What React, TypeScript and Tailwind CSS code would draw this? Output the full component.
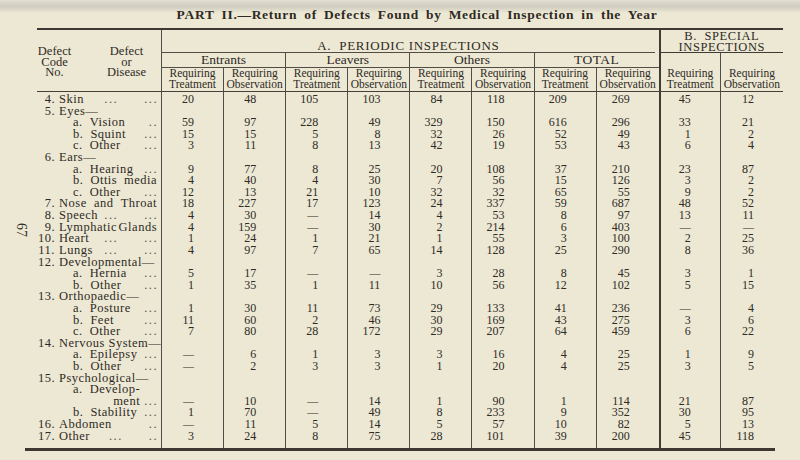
import React from "react";

type L = { n?: string; s?: string; t: string; d?: string[]; j?: boolean; right?: boolean };
type R = { l: L; v?: string };

const rows: R[] = [
  { l: { n: "4.", t: "Skin", d: ["...", "..."] }, v: "20 48 105 103 84 118 209 269 45 12" },
  { l: { n: "5.", t: "Eyes—" } },
  { l: { s: "a.", t: "Vision", d: [".."] }, v: "59 97 228 49 329 150 616 296 33 21" },
  { l: { s: "b.", t: "Squint", d: ["..."] }, v: "15 15 5 8 32 26 52 49 1 2" },
  { l: { s: "c.", t: "Other", d: ["..."] }, v: "3 11 8 13 42 19 53 43 6 4" },
  { l: { n: "6.", t: "Ears—" } },
  { l: { s: "a.", t: "Hearing", d: ["..."] }, v: "9 77 8 25 20 108 37 210 23 87" },
  { l: { s: "b.", t: "Ottis media", j: true }, v: "4 40 4 30 7 56 15 126 3 2" },
  { l: { s: "c.", t: "Other", d: ["..."] }, v: "12 13 21 10 32 32 65 55 9 2" },
  { l: { n: "7.", t: "Nose and Throat", j: true }, v: "18 227 17 123 24 337 59 687 48 52" },
  { l: { n: "8.", t: "Speech", d: ["...", "..."] }, v: "4 30 - 14 4 53 8 97 13 11" },
  { l: { n: "9.", t: "Lymphatic Glands", j: true }, v: "4 159 - 30 2 214 6 403 - -" },
  { l: { n: "10.", t: "Heart", d: ["...", "..."] }, v: "1 24 1 21 1 55 3 100 2 25" },
  { l: { n: "11.", t: "Lungs", d: ["...", "..."] }, v: "4 97 7 65 14 128 25 290 8 36" },
  { l: { n: "12.", t: "Developmental—" } },
  { l: { s: "a.", t: "Hernia", d: ["..."] }, v: "5 17 - - 3 28 8 45 3 1" },
  { l: { s: "b.", t: "Other", d: ["..."] }, v: "1 35 1 11 10 56 12 102 5 15" },
  { l: { n: "13.", t: "Orthopaedic—" } },
  { l: { s: "a.", t: "Posture", d: ["..."] }, v: "1 30 11 73 29 133 41 236 - 4" },
  { l: { s: "b.", t: "Feet", d: ["..."] }, v: "11 60 2 46 30 169 43 275 3 6" },
  { l: { s: "c.", t: "Other", d: ["..."] }, v: "7 80 28 172 29 207 64 459 6 22" },
  { l: { n: "14.", t: "Nervous System—" } },
  { l: { s: "a.", t: "Epilepsy", d: ["..."] }, v: "- 6 1 3 3 16 4 25 1 9" },
  { l: { s: "b.", t: "Other", d: ["..."] }, v: "- 2 3 3 1 20 4 25 3 5" },
  { l: { n: "15.", t: "Psychological—" } },
  { l: { s: "a.", t: "Develop-" } },
  { l: { t: "ment", right: true }, v: "- 10 - 14 1 90 1 114 21 87" },
  { l: { s: "b.", t: "Stability", d: ["..."] }, v: "1 70 - 49 8 233 9 352 30 95" },
  { l: { n: "16.", t: "Abdomen", d: [".."] }, v: "- 11 5 14 5 57 10 82 5 13" },
  { l: { n: "17.", t: "Other", d: ["...", ".."] }, v: "3 24 8 75 28 101 39 200 45 118" },
];

const rowCls = "flex h-[11.62px] items-center whitespace-nowrap leading-[11.62px]";

function Label({ l }: { l: L }) {
  const lead =
    l.n !== undefined ? (
      <span className="w-[18px] shrink-0 text-right">{l.n}</span>
    ) : l.s ? (
      <span className="ml-[36px] shrink-0">{l.s}</span>
    ) : null;
  const gap = l.n !== undefined ? "ml-[4px]" : "ml-[7px]";
  if (l.right) {
    return (
      <div className={rowCls + " justify-end pr-[3px]"}>
        <span>{l.t}</span>
        <span className="ml-[4px] tracking-[1.5px] text-[#5a544b]">...</span>
      </div>
    );
  }
  if (l.j) {
    return (
      <div className={rowCls + " pr-[4px]"}>
        {lead}
        <span className={gap + " flex flex-1 justify-between"}>
          {l.t.split(" ").map((w) => (
            <span key={w}>{w}</span>
          ))}
        </span>
      </div>
    );
  }
  return (
    <div className={rowCls + " pr-[3px]"}>
      {lead}
      <span className={gap}>{l.t}</span>
      {l.d && l.d.length === 2 ? (
        <>
          <span className="ml-auto tracking-[1.5px] text-[#5a544b]">{l.d[0]}</span>
          <span className="ml-[26px] tracking-[1.5px] text-[#5a544b]">{l.d[1]}</span>
        </>
      ) : l.d ? (
        <span className="ml-auto tracking-[1.5px] text-[#5a544b]">{l.d[0]}</span>
      ) : null}
    </div>
  );
}

const groups = ["Entrants", "Leavers", "Others", "TOTAL"];

export default function App() {
  return (
    <div className="relative h-[460px] w-[800px] overflow-hidden bg-[#ece8d4] font-['Liberation_Serif',serif] text-[#2f2a25]">
      <div className="absolute inset-x-0 top-0 h-[13px] bg-linear-to-b from-[#e2dfd2] via-[#d0cdc0] to-[#ece8d4]" />
      <div className="absolute left-[14px] top-[223px] rotate-90 text-[14px] leading-[14px]">67</div>

      <div className="relative ml-[37px] w-[746px] pt-[7px]">
        <div className="flex h-[15px] items-center justify-center pl-[14px] text-[13.5px] font-bold leading-[15px] tracking-[0.7px] [word-spacing:3px]">
          PART II.—Return of Defects Found by Medical Inspection in the Year
        </div>
        <div className="mt-[6px] h-[2px] bg-[#3d3833]" />

        {/* Header */}
        <div className="grid grid-cols-[125px_repeat(10,62.1px)] grid-rows-[23px_15px_23px] border-b border-[#45403a]">
          <div className="col-start-1 row-span-3 row-start-1 flex border-r border-[#514c45] pt-[16px] text-[12.5px] leading-[10.5px]">
            <div className="w-[35px] text-center">
              Defect
              <br />
              Code
              <br />
              No.
            </div>
            <div className="ml-[20px] w-[69px] text-center">
              Defect
              <br />
              or
              <br />
              Disease
            </div>
          </div>
          <div className="col-span-8 col-start-2 row-start-1 mr-[4px] flex items-end justify-center border-b border-[#514c45] pb-[1px] text-[13px] leading-[11px] tracking-[0.7px]">
            A.&nbsp; PERIODIC INSPECTIONS
          </div>
          <div className="col-span-2 col-start-10 row-start-1 border-b border-l-2 border-[#3f3a34] pt-[1px] text-center text-[12.5px] leading-[10.5px] tracking-[0.6px]">
            B.&nbsp; SPECIAL
            <br />
            INSPECTIONS
          </div>
          <div className="col-span-2 col-start-2 row-start-2 border-r border-b border-[#514c45] text-center text-[13.5px] leading-[14px]">
            {groups[0]}
          </div>
          <div className="col-span-2 col-start-4 row-start-2 border-r border-b border-[#514c45] text-center text-[13.5px] leading-[14px]">
            {groups[1]}
          </div>
          <div className="col-span-2 col-start-6 row-start-2 border-r border-b border-[#514c45] text-center text-[13.5px] leading-[14px]">
            {groups[2]}
          </div>
          <div className="col-span-2 col-start-8 row-start-2 border-b border-[#514c45] text-center text-[13.5px] leading-[14px] tracking-[0.5px]">
            {groups[3]}
          </div>
          <div className="col-start-10 row-span-2 row-start-2 flex flex-col justify-end border-r border-l-2 border-[#514c45] border-l-[#3f3a34] pb-[1px] text-center text-[11.5px] leading-[11px]">
            Requiring
            <br />
            Treatment
          </div>
          <div className="col-start-11 row-span-2 row-start-2 flex flex-col justify-end pb-[1px] text-center text-[11.5px] leading-[11px]">
            Requiring
            <br />
            Observation
          </div>
          {Array.from({ length: 8 }).map((_, i) => (
            <div
              key={i}
              className={
                "row-start-3 text-center text-[11.5px] leading-[11px] " +
                (i === 7 ? "" : "border-r border-[#514c45]")
              }
              style={{ gridColumnStart: i + 2 }}
            >
              Requiring
              <br />
              {i % 2 === 0 ? "Treatment" : "Observation"}
            </div>
          ))}
        </div>

        {/* Body */}
        <div className="grid grid-cols-[125px_repeat(10,62.1px)]">
          <div className="border-r border-[#514c45] pt-[2px] pb-[6px] text-[12.5px] tracking-[0.5px]">
            {rows.map((r, i) => (
              <Label key={i} l={r.l} />
            ))}
          </div>
          {Array.from({ length: 10 }).map((_, c) => (
            <div
              key={c}
              className={
                "pt-[2px] pb-[6px] text-[12px] " +
                (c === 7
                  ? ""
                  : c === 8
                  ? "border-r border-l-2 border-[#514c45] border-l-[#3f3a34]"
                  : c === 9
                  ? ""
                  : "border-r border-[#514c45]")
              }
            >
              {rows.map((r, i) => {
                const v = r.v ? r.v.split(" ")[c] : "";
                return (
                  <div key={i} className="h-[11.62px] whitespace-nowrap pr-[29px] text-right leading-[11.62px]">
                    {v === "-" ? <span className="text-[11px]">—</span> : v}
                  </div>
                );
              })}
            </div>
          ))}
        </div>
        <div className="-ml-[12px] h-[3px] w-[750px] bg-[#3d3833]" />
      </div>
    </div>
  );
}
